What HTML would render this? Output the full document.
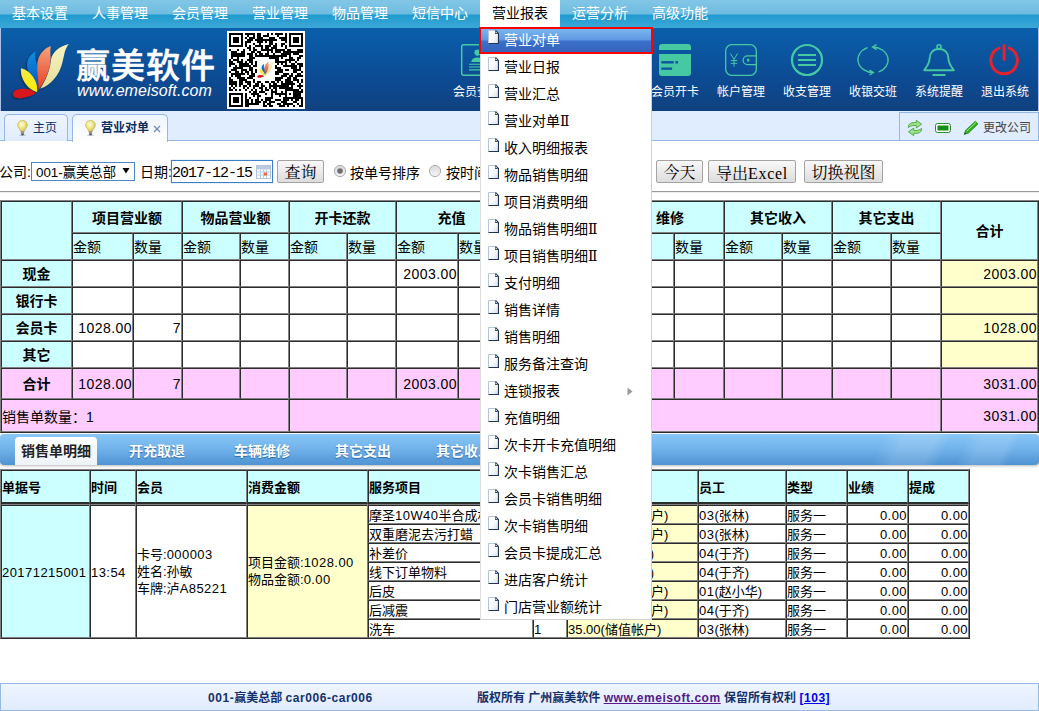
<!DOCTYPE html>
<html lang="zh-CN">
<head>
<meta charset="utf-8">
<title>赢美软件 - 营业对单</title>
<style>
*{box-sizing:border-box;}
html,body{margin:0;padding:0;}
body{width:1039px;height:711px;overflow:hidden;position:relative;background:#fff;
  font-family:"Liberation Sans","Noto Sans CJK SC",sans-serif;font-size:14px;color:#000;}
.abs{position:absolute;}
/* ---------- top nav ---------- */
#nav{position:absolute;left:0;top:0;width:1039px;height:28px;
  background:linear-gradient(#82c6e6 0,#6ebce1 14px,#209ad0 15px,#3ca8d6 28px);}
#nav span{position:absolute;top:0;height:28px;width:80px;line-height:26px;text-align:center;color:#fff;font-size:14px;}
#nav span.on{background:#fff;color:#000;height:27px;}
/* ---------- banner ---------- */
#banner{position:absolute;left:0;top:28px;width:1039px;height:83px;border-left:1px solid #a9c1e9;border-right:1px solid #a9c1e9;
  background:linear-gradient(#0a5fab 0,#0c4b94 60%,#10417f 100%);}
#brand{position:absolute;left:75px;top:18px;color:#fff;font-weight:500;-webkit-text-stroke:.5px #fff;font-size:34px;line-height:40px;letter-spacing:1px;white-space:nowrap;}
#url{position:absolute;left:76px;top:53px;color:#fff;font-style:italic;font-size:16px;line-height:20px;white-space:nowrap;letter-spacing:.1px;}
.tool{position:absolute;top:57px;width:66px;text-align:center;color:#fff;font-size:12px;line-height:14px;white-space:nowrap;}
/* ---------- tabs ---------- */
#tabs{position:absolute;left:0;top:111px;width:1039px;height:30px;background:#e0ecff;border-bottom:1px solid #95b8e7;}
.tab{position:absolute;top:3px;height:27px;border:1px solid #95b8e7;border-bottom:0;border-radius:5px 5px 0 0;
  background:linear-gradient(#eff5ff,#e0ecff);font-size:12px;line-height:27px;color:#0e2d5f;white-space:nowrap;}
.tab.sel{background:linear-gradient(#eff5ff,#fff);height:28px;font-weight:bold;}
#tabtool{position:absolute;left:899px;top:1px;width:140px;height:28px;border:1px solid #95b8e7;border-bottom:0;background:#e0ecff;}
/* ---------- toolbar ---------- */
#bar{position:absolute;left:0;top:158px;width:1039px;height:28px;font-size:14px;}
.btn{position:absolute;top:2px;height:23px;border:1px solid #a3a3a3;border-radius:2px;background:linear-gradient(#f8f8f8,#dddddd);
  font-family:"Liberation Mono","Noto Serif CJK SC",serif;font-size:16px;line-height:26px;text-align:center;color:#000;white-space:nowrap;overflow:hidden;}
#hr{position:absolute;left:0;top:191px;width:1039px;height:2px;border-top:1px solid #9a9a9a;border-bottom:1px solid #eee;}
/* ---------- tables ---------- */
table{border-collapse:separate;border-spacing:0;table-layout:fixed;border:1px solid;border-color:#808080 #2c2c2c #2c2c2c #808080;}
td,th{border:1px solid;border-color:#2c2c2c #808080 #808080 #2c2c2c;padding:0;overflow:hidden;white-space:nowrap;}
#t1{position:absolute;left:0;top:200px;width:1039px;font-size:14px;}
#t1 th{background:#ccffff;font-weight:bold;text-align:center;padding-bottom:1px;}
#t1 td.h{background:#ccffff;text-align:left;font-weight:normal;padding-bottom:2px;letter-spacing:0;}
#t1 td{text-align:right;background:#fff;padding-right:0;letter-spacing:.45px;}
#t1 td.y{background:#ffffcc;}
#t1 tr.p td,#t1 tr.p th{background:#ffccff;}
/* ---------- second tab bar ---------- */
#bar2{position:absolute;left:0;top:434px;width:1039px;height:31px;border-radius:4px;box-shadow:0 1px 3px rgba(0,0,0,.28);
  background:linear-gradient(115deg,rgba(255,255,255,0) 84%,rgba(255,255,255,.14) 86%,rgba(255,255,255,.14) 89%,rgba(255,255,255,0) 90.5%,rgba(255,255,255,0) 92%,rgba(255,255,255,.12) 93.5%,rgba(255,255,255,.12) 96%,rgba(255,255,255,0) 97%),linear-gradient(#88c7f7,#70b1ea 50%,#4f93d3);}
#bar2 span{position:absolute;top:3px;height:28px;line-height:29px;font-weight:bold;font-size:14px;color:#fff;text-shadow:0 1px 1px #2d66a6;white-space:nowrap;}
#bar2 span.sel{left:15px;width:82px;text-align:center;background:linear-gradient(#fff,#eef3f8);color:#222;border-radius:4px 4px 0 0;text-shadow:none;}
/* ---------- detail table ---------- */
#t2{position:absolute;left:0;top:469px;width:970px;font-size:13px;}
#t2 th{background:#ccffff;text-align:left;font-weight:bold;height:34px;border-bottom:2px solid #2c2c2c;}
#t2 td{background:#fff;height:19px;line-height:15px;padding-top:2px;}
#t2 td.m{line-height:17px;padding-top:0;}
.n{letter-spacing:.45px;}
#t2 td.z .n{letter-spacing:0;}
#t2 tr.f td{height:20px;border-top-color:#808080;box-shadow:inset 0 1px 0 #2c2c2c;}
#t2 td.y{background:#ffffcc;}
#t2 td.c{background:#ccffff;}
#t2 td.r{text-align:right;}
/* ---------- footer ---------- */
#foot{position:absolute;left:0;top:683px;width:1039px;height:28px;border:1px solid #95b8e7;background:linear-gradient(#eff5ff,#e0ecff);
  font-size:12px;font-weight:bold;color:#15316b;line-height:28px;}
#foot .n{letter-spacing:.55px;}
/* ---------- menu ---------- */
#menu{position:absolute;left:480px;top:27px;width:172px;height:593px;background:#fff;}
#menu::after{content:'';position:absolute;left:0;top:27px;width:172px;height:566px;box-sizing:border-box;border:1px solid #cfcfcf;border-top:0;border-left-color:#dedede;pointer-events:none;}
#menu div{position:relative;height:27px;line-height:26px;padding-left:24px;font-size:14px;color:#000;white-space:nowrap;}
.rn{font-family:'DejaVu Serif','Noto Serif CJK SC',serif;font-size:14px;}
#menu div.on{color:#fff;background:linear-gradient(#7cbcf2 0,#6198e2 13px,#3b71cc 14px,#355fb6 27px);}
#menu div.on::after{content:'';position:absolute;left:-1px;top:0;width:174px;height:27px;box-sizing:border-box;border:2px solid #ff0000;}
</style>
</head>
<body>
<svg width="0" height="0" style="position:absolute"><defs>
<radialGradient id="bulbg" cx="40%" cy="35%" r="70%"><stop offset="0" stop-color="#fffcd8"/><stop offset="0.55" stop-color="#ebe480"/><stop offset="1" stop-color="#c9b752"/></radialGradient>
<linearGradient id="pgg" x1="0" y1="0" x2="1" y2="1"><stop offset="0.45" stop-color="#fff"/><stop offset="1" stop-color="#d3def0"/></linearGradient>
<g id="bulb"><ellipse cx="5.5" cy="15.2" rx="3.6" ry="0.8" fill="#000" opacity=".18"/><path d="M5.5,0.5C2.5,0.5 .7,2.6 .7,5C.7,7.5 3.1,9 3.7,11.5H7.3C7.9,9 10.3,7.5 10.3,5C10.3,2.6 8.5,.5 5.5,.5Z" fill="url(#bulbg)" stroke="#cbb55e" stroke-width=".8"/><rect x="3.9" y="11.4" width="3.2" height="2.8" fill="#8e8e8e"/><rect x="4.4" y="14" width="2.2" height="1.2" fill="#3c3c3c"/></g>
<g id="pg"><path d="M.5,.5H7.5L10.5,3.5V13.5H.5Z" fill="url(#pgg)"/><path d="M.5,13.5V.5H7.5" fill="none" stroke="#b5c4e0"/><path d="M7.5,.5L10.5,3.5V13.5H.5" fill="none" stroke="#22364f" stroke-width="1.2"/><path d="M7,.5V4H10.5Z" fill="#3b526f"/><rect x="7.6" y="1.8" width="1.2" height="1.2" fill="#dfe7f3"/></g>
</defs></svg>
<div id="nav">
<span style="left:0">基本设置</span><span style="left:80px">人事管理</span><span style="left:160px">会员管理</span><span style="left:240px">营业管理</span><span style="left:320px">物品管理</span><span style="left:400px">短信中心</span><span class="on" style="left:480px">营业报表</span><span style="left:560px">运营分析</span><span style="left:640px">高级功能</span>
</div>
<div id="banner">
<!--BSVG--><svg class="abs" style="left:-1px;top:0" width="1039" height="83" viewBox="0 28 1039 83">
<defs>
<linearGradient id="gor" x1="0" y1="0" x2="0" y2="1"><stop offset="0" stop-color="#f4a57c"/><stop offset="1" stop-color="#e83a22"/></linearGradient>
<linearGradient id="gbl" x1="0" y1="0" x2="0" y2="1"><stop offset="0" stop-color="#0a8ee0"/><stop offset="1" stop-color="#0a55b8"/></linearGradient>
<linearGradient id="gye" x1="0" y1="0" x2="0" y2="1"><stop offset="0" stop-color="#f5e84a"/><stop offset="1" stop-color="#ffee00"/></linearGradient>
<linearGradient id="gcr" x1="0" y1="0" x2="0" y2="1"><stop offset="0" stop-color="#f6f3c4"/><stop offset="1" stop-color="#e6df96"/></linearGradient>
<filter id="sh" x="-20%" y="-20%" width="140%" height="140%"><feDropShadow dx="-1" dy="1" stdDeviation="1.2" flood-color="#000" flood-opacity=".45"/></filter>
<g id="petals">
<path d="M28.5,44.5 C34,36 38,26 39,16 C40,8 48,2 57,0 C53,4 52.5,10 50.5,18 C47.5,31 39,41 28.5,44.5Z" fill="url(#gcr)"/>
<path d="M26,44 C22,36 12,26 16,16 C18,11 21,9 23.5,7.5 C22,14 25,20 26,26 C27,32 27,38 26,44Z" fill="url(#gbl)"/>
<path d="M26.5,46 C27,36 24,24 26,16 C28,9 33,4 38.8,2 C37.5,8 39.5,14 38,21 C36,31 31,40 26.5,46Z" fill="url(#gor)"/>
<path d="M25,48 C17,46 8,36 9,24.3 C17,26 26.5,36 25,48Z" fill="url(#gye)"/>
<path d="M24,49 C18,44 6,43 1.5,48 C-1,52 4,55 10,54 C16,53 21,51 24,49Z" fill="#d8141c"/>
</g>
</defs>
<g transform="translate(12,44)" filter="url(#sh)"><use href="#petals"/></g>
<g transform="translate(227,31)"><rect width="78" height="78" fill="#fff"/><g transform="translate(2,2)"><path d="M0 0h14v2h-14zM16 0h10v2h-10zM28 0h4v2h-4zM38 0h2v2h-2zM42 0h2v2h-2zM46 0h8v2h-8zM56 0h2v2h-2zM60 0h14v2h-14zM0 2h2v2h-2zM12 2h2v2h-2zM18 2h2v2h-2zM24 2h2v2h-2zM28 2h4v2h-4zM34 2h6v2h-6zM48 2h2v2h-2zM56 2h2v2h-2zM60 2h2v2h-2zM72 2h2v2h-2zM0 4h2v2h-2zM4 4h6v2h-6zM12 4h2v2h-2zM16 4h2v2h-2zM20 4h6v2h-6zM28 4h6v2h-6zM40 4h6v2h-6zM50 4h8v2h-8zM60 4h2v2h-2zM64 4h6v2h-6zM72 4h2v2h-2zM0 6h2v2h-2zM4 6h6v2h-6zM12 6h2v2h-2zM18 6h6v2h-6zM26 6h22v2h-22zM52 6h6v2h-6zM60 6h2v2h-2zM64 6h6v2h-6zM72 6h2v2h-2zM0 8h2v2h-2zM4 8h6v2h-6zM12 8h2v2h-2zM16 8h6v2h-6zM28 8h6v2h-6zM36 8h2v2h-2zM40 8h4v2h-4zM56 8h2v2h-2zM60 8h2v2h-2zM64 8h6v2h-6zM72 8h2v2h-2zM0 10h2v2h-2zM12 10h2v2h-2zM16 10h2v2h-2zM24 10h2v2h-2zM30 10h2v2h-2zM40 10h4v2h-4zM46 10h2v2h-2zM52 10h4v2h-4zM60 10h2v2h-2zM72 10h2v2h-2zM0 12h14v2h-14zM16 12h2v2h-2zM20 12h2v2h-2zM26 12h8v2h-8zM36 12h6v2h-6zM44 12h4v2h-4zM52 12h2v2h-2zM56 12h2v2h-2zM60 12h14v2h-14zM18 14h4v2h-4zM24 14h2v2h-2zM32 14h2v2h-2zM36 14h4v2h-4zM42 14h6v2h-6zM56 14h2v2h-2zM0 16h2v2h-2zM8 16h2v2h-2zM14 16h2v2h-2zM20 16h2v2h-2zM24 16h4v2h-4zM32 16h12v2h-12zM46 16h10v2h-10zM58 16h4v2h-4zM68 16h6v2h-6zM2 18h6v2h-6zM12 18h4v2h-4zM22 18h4v2h-4zM28 18h4v2h-4zM38 18h2v2h-2zM42 18h2v2h-2zM46 18h6v2h-6zM54 18h20v2h-20zM2 20h14v2h-14zM18 20h6v2h-6zM26 20h2v2h-2zM30 20h4v2h-4zM36 20h4v2h-4zM44 20h2v2h-2zM52 20h10v2h-10zM64 20h6v2h-6zM2 22h14v2h-14zM20 22h4v2h-4zM26 22h32v2h-32zM60 22h2v2h-2zM70 22h4v2h-4zM2 24h2v2h-2zM8 24h2v2h-2zM20 24h6v2h-6zM40 24h10v2h-10zM52 24h2v2h-2zM60 24h4v2h-4zM68 24h4v2h-4zM0 26h2v2h-2zM4 26h6v2h-6zM12 26h2v2h-2zM18 26h6v2h-6zM46 26h4v2h-4zM56 26h10v2h-10zM68 26h2v2h-2zM0 28h4v2h-4zM8 28h6v2h-6zM16 28h2v2h-2zM20 28h4v2h-4zM26 28h2v2h-2zM46 28h12v2h-12zM60 28h2v2h-2zM66 28h2v2h-2zM0 30h6v2h-6zM10 30h10v2h-10zM22 30h2v2h-2zM26 30h2v2h-2zM48 30h2v2h-2zM52 30h2v2h-2zM56 30h2v2h-2zM62 30h4v2h-4zM68 30h6v2h-6zM0 32h2v2h-2zM6 32h2v2h-2zM10 32h12v2h-12zM24 32h4v2h-4zM46 32h2v2h-2zM54 32h14v2h-14zM70 32h4v2h-4zM4 34h10v2h-10zM20 34h4v2h-4zM46 34h6v2h-6zM62 34h6v2h-6zM70 34h2v2h-2zM2 36h6v2h-6zM12 36h6v2h-6zM20 36h4v2h-4zM26 36h2v2h-2zM48 36h6v2h-6zM56 36h4v2h-4zM64 36h8v2h-8zM0 38h2v2h-2zM6 38h4v2h-4zM12 38h2v2h-2zM16 38h4v2h-4zM22 38h2v2h-2zM26 38h2v2h-2zM46 38h8v2h-8zM64 38h4v2h-4zM72 38h2v2h-2zM2 40h14v2h-14zM18 40h2v2h-2zM22 40h4v2h-4zM46 40h4v2h-4zM54 40h6v2h-6zM62 40h2v2h-2zM68 40h4v2h-4zM2 42h2v2h-2zM6 42h6v2h-6zM20 42h6v2h-6zM52 42h6v2h-6zM60 42h4v2h-4zM66 42h8v2h-8zM0 44h2v2h-2zM8 44h8v2h-8zM18 44h6v2h-6zM46 44h8v2h-8zM58 44h4v2h-4zM64 44h4v2h-4zM0 46h4v2h-4zM10 46h8v2h-8zM24 46h2v2h-2zM46 46h6v2h-6zM56 46h6v2h-6zM64 46h6v2h-6zM72 46h2v2h-2zM0 48h8v2h-8zM10 48h4v2h-4zM16 48h6v2h-6zM24 48h2v2h-2zM28 48h4v2h-4zM36 48h4v2h-4zM42 48h4v2h-4zM48 48h2v2h-2zM52 48h2v2h-2zM56 48h8v2h-8zM68 48h2v2h-2zM72 48h2v2h-2zM0 50h8v2h-8zM10 50h4v2h-4zM18 50h4v2h-4zM26 50h4v2h-4zM32 50h2v2h-2zM40 50h2v2h-2zM44 50h4v2h-4zM52 50h14v2h-14zM70 50h2v2h-2zM2 52h2v2h-2zM6 52h2v2h-2zM10 52h2v2h-2zM14 52h4v2h-4zM20 52h2v2h-2zM24 52h6v2h-6zM32 52h4v2h-4zM40 52h20v2h-20zM62 52h2v2h-2zM68 52h6v2h-6zM0 54h2v2h-2zM4 54h2v2h-2zM14 54h2v2h-2zM18 54h2v2h-2zM24 54h2v2h-2zM30 54h4v2h-4zM36 54h2v2h-2zM40 54h2v2h-2zM44 54h4v2h-4zM50 54h14v2h-14zM70 54h2v2h-2zM0 56h4v2h-4zM6 56h2v2h-2zM10 56h2v2h-2zM16 56h2v2h-2zM22 56h2v2h-2zM26 56h2v2h-2zM32 56h2v2h-2zM36 56h4v2h-4zM42 56h2v2h-2zM46 56h2v2h-2zM56 56h14v2h-14zM72 56h2v2h-2zM20 58h2v2h-2zM24 58h4v2h-4zM30 58h6v2h-6zM42 58h6v2h-6zM52 58h2v2h-2zM56 58h2v2h-2zM64 58h10v2h-10zM0 60h14v2h-14zM16 60h2v2h-2zM22 60h8v2h-8zM36 60h2v2h-2zM42 60h2v2h-2zM46 60h12v2h-12zM60 60h2v2h-2zM64 60h8v2h-8zM0 62h2v2h-2zM12 62h2v2h-2zM16 62h2v2h-2zM24 62h2v2h-2zM28 62h4v2h-4zM42 62h2v2h-2zM50 62h2v2h-2zM56 62h2v2h-2zM64 62h8v2h-8zM0 64h2v2h-2zM4 64h6v2h-6zM12 64h2v2h-2zM16 64h2v2h-2zM20 64h2v2h-2zM28 64h2v2h-2zM36 64h8v2h-8zM54 64h20v2h-20zM0 66h2v2h-2zM4 66h6v2h-6zM12 66h2v2h-2zM16 66h4v2h-4zM22 66h2v2h-2zM26 66h4v2h-4zM32 66h2v2h-2zM36 66h6v2h-6zM46 66h6v2h-6zM54 66h6v2h-6zM62 66h2v2h-2zM66 66h4v2h-4zM72 66h2v2h-2zM0 68h2v2h-2zM4 68h6v2h-6zM12 68h2v2h-2zM16 68h4v2h-4zM22 68h2v2h-2zM26 68h6v2h-6zM34 68h4v2h-4zM40 68h6v2h-6zM52 68h6v2h-6zM64 68h4v2h-4zM72 68h2v2h-2zM0 70h2v2h-2zM12 70h2v2h-2zM16 70h14v2h-14zM34 70h2v2h-2zM38 70h4v2h-4zM48 70h4v2h-4zM54 70h10v2h-10zM68 70h2v2h-2zM72 70h2v2h-2zM0 72h14v2h-14zM16 72h4v2h-4zM34 72h4v2h-4zM40 72h4v2h-4zM50 72h6v2h-6zM58 72h2v2h-2zM64 72h2v2h-2zM70 72h4v2h-4z" fill="#000"/></g><g transform="translate(30,30.5) scale(0.3)"><use href="#petals"/></g></g>
<g fill="none" stroke="#46c9a2" stroke-width="1.5">
<rect x="461.7" y="44.7" width="30.6" height="30.6" rx="2"/>
<rect x="725.7" y="44.7" width="30.6" height="30.6" rx="6" stroke-width="1.3"/>
<path d="M757,55.8h-9.5a4.4,4.4 0 0 0 0,8.8h9.5" stroke-width="1.3"/>
<path d="M730.5,53.5l3.5,6l3.5,-6M734,59.5v7M730.8,60.6h6.4M730.8,63.3h6.4" stroke-width="1"/>
<circle cx="807" cy="60" r="15" stroke-width="2.2"/>
<path d="M798,55h18M798,60h18M798,65h18" stroke-width="2.2"/>
<path d="M867.5,47.6A15.6,13 0 0 0 873.5,72.6M869.5,75l4,-2.4l-4,-2.6" stroke-width="1.3"/>
<path d="M878.5,72A15.6,13 0 0 0 872.5,47M876.5,44.6l-4,2.4l4,2.6" stroke-width="1.3"/>
<circle cx="939" cy="46.7" r="2" stroke-width="1.6"/>
<path d="M939,49C933,49 929.8,53 929.6,58.5C929.4,64 926,67.5 924.2,70.2H953.8C952,67.5 948.6,64 948.4,58.5C948.2,53 945,49 939,49Z" stroke-width="1.9" stroke-linejoin="round"/>
<path d="M932.5,75h13" stroke-width="2"/>
</g>
<g fill="#46c9a2"><circle cx="477.5" cy="52.6" r="3.1"/><path d="M471.2,62C471.6,59 474,57.6 477.5,57.6S483.4,59 483.8,62Z"/><path d="M469,63.7h17v1.1h-17zM469,66.5h17v1.1h-17zM469,69.3h17v1.1h-17z"/>
<path d="M659,47a3,3 0 0 1 3,-3h26a3,3 0 0 1 3,3v3.1h-32zM659,54h32v19a3,3 0 0 1 -3,3h-26a3,3 0 0 1 -3,-3z"/>
<ellipse cx="748.2" cy="60.1" rx="1.3" ry="1.6"/></g>
<g fill="#0c55a0"><rect x="661.3" y="61.1" width="12.4" height="2.4"/><rect x="675.4" y="61.1" width="2.6" height="2.4"/><rect x="661.3" y="67.5" width="10.8" height="2.3"/></g>
<g fill="none" stroke="#e8212c" stroke-width="3" stroke-linecap="round"><path d="M999,48.2A13.3,13.3 0 1 0 1009.2,48.2"/><path d="M1004.1,45.5v14"/></g>
</svg><!--/BSVG-->
<div id="brand">赢美软件</div>
<div id="url">www.emeisoft.com</div>
<div class="tool" style="left:443px">会员查询</div>
<div class="tool" style="left:641px">会员开卡</div>
<div class="tool" style="left:707px">帐户管理</div>
<div class="tool" style="left:773px">收支管理</div>
<div class="tool" style="left:839px">收银交班</div>
<div class="tool" style="left:905px">系统提醒</div>
<div class="tool" style="left:971px">退出系统</div>
</div>
<div id="tabs">
<div class="tab" style="left:4px;width:64px;padding-left:28px"><svg class="abs" style="left:12px;top:5px" width="11" height="16"><use href="#bulb"/></svg>主页</div>
<div class="tab sel" style="left:72px;width:96px;padding-left:28px"><svg class="abs" style="left:12px;top:5px" width="11" height="16"><use href="#bulb"/></svg>营业对单<svg class="abs" style="left:80px;top:10px" width="8" height="8" viewBox="0 0 8 8"><path d="M1,1l6,6M7,1l-6,6" stroke="#6f8cbd" stroke-width="1.3" fill="none"/></svg></div>
<div id="tabtool"><svg class="abs" style="left:0;top:0" width="90" height="28" viewBox="900 112 90 28">
<g fill="#9be28a" stroke="#4aa53e" stroke-width=".9" stroke-linejoin="round"><path d="M908.3,126.5C908.3,122.5 911.5,121.3 916.3,121.6V119.3L921.6,123.2L916.3,127V124.6C913,124.3 911,124.6 908.3,126.5Z"/><path d="M921.7,127.5C921.7,131.5 918.5,132.7 913.7,132.4V134.7L908.4,130.8L913.7,127V129.4C917,129.7 919,129.4 921.7,127.5Z"/></g>
<rect x="935.5" y="122.5" width="15" height="9" rx="2" fill="#fff" stroke="#2c8c2c"/><rect x="937.5" y="124.5" width="11" height="5" fill="#129012"/>
<path d="M964.2,133.4L965.6,129.2L975.4,120.2L978,122.9L968.3,132.2Z" fill="#2fb01f" stroke="#1f8a14" stroke-width=".7"/><path d="M966.6,130.2L975.9,121.6" stroke="#9fe88d" stroke-width="1"/><path d="M964.2,133.4L964.9,131.3L966.2,132.7Z" fill="#333"/>
</svg><span class="abs" style="left:83px;top:8px;font-size:12px;line-height:14px;color:#444">更改公司</span></div>
</div>
<div id="bar">
<span class="abs" style="left:-1px;top:5px;line-height:18px">公司:</span>
<div class="abs" style="left:31px;top:4px;width:104px;height:19px;border:1px solid #4c86c6;background:#fff;font-size:13.33px;line-height:20px;padding-left:4px;overflow:hidden;color:#000;white-space:nowrap">001-赢美总部<svg class="abs" style="left:90px;top:5px" width="8" height="6" viewBox="0 0 8 6"><path d="M0.5 0h7L4 5.5z" fill="#000"/></svg></div>
<span class="abs" style="left:140px;top:5px;line-height:18px">日期:</span>
<div class="abs" style="left:171px;top:2px;width:102px;height:23px;border:1px solid #3f7fc6;box-shadow:0 0 1px #7aa7da;background:#fff;font-family:'Liberation Mono',monospace;font-size:15px;letter-spacing:-1px;line-height:26px;padding-left:0;white-space:nowrap">2017-12-15<svg class="abs" style="left:84px;top:4px" width="15" height="14" viewBox="0 0 15 14"><rect x="0.5" y="0.5" width="14" height="13" fill="#fff" stroke="#b3c3dc"/><rect x="1" y="1" width="13" height="3.5" fill="#bccbe2"/><path d="M1 7h13M1 10h13M4.5 4.5v9M7.5 4.5v9M10.5 4.5v9" stroke="#b9cdea" stroke-width="1"/><rect x="8" y="7.5" width="3" height="3" fill="#e8694a"/></svg></div>
<svg class="abs" style="left:333px;top:6px" width="14" height="14" viewBox="0 0 14 14"><defs><linearGradient id="rg" x1="0" y1="0" x2="0" y2="1"><stop offset="0" stop-color="#d8d8d8"/><stop offset="1" stop-color="#f6f6f6"/></linearGradient></defs><circle cx="7" cy="7" r="5.6" fill="url(#rg)" stroke="#adadad"/><circle cx="7" cy="7" r="2.8" fill="#6e6e6e"/></svg>
<svg class="abs" style="left:428px;top:6px" width="14" height="14" viewBox="0 0 14 14"><circle cx="7" cy="7" r="5.6" fill="url(#rg)" stroke="#adadad"/></svg>
<div class="btn" style="left:277px;width:47px">查询</div>
<span class="abs" style="left:350px;top:6px;line-height:18px">按单号排序</span>
<span class="abs" style="left:446px;top:6px;line-height:18px">按时间排序</span>
<div class="btn" style="left:656px;width:47px">今天</div>
<div class="btn" style="left:708px;width:88px">导出<span style="font-family:'Liberation Serif',serif;letter-spacing:.7px">Excel</span></div>
<div class="btn" style="left:804px;width:79px">切换视图</div>
</div>
<div id="hr"></div>
<!--T1-->
<table id="t1"><colgroup><col style="width:71px"><col style="width:61px"><col style="width:49px"><col style="width:58px"><col style="width:49px"><col style="width:58px"><col style="width:49px"><col style="width:62px"><col style="width:49px"><col style="width:58px"><col style="width:51px"><col style="width:58px"><col style="width:50px"><col style="width:58px"><col style="width:50px"><col style="width:59px"><col style="width:50px"><col style="width:97px"></colgroup>
<tr style="height:32px"><th rowspan="2"></th><th colspan="2">项目营业额</th><th colspan="2">物品营业额</th><th colspan="2">开卡还款</th><th colspan="2">充值</th><th colspan="2">取款退卡</th><th colspan="2">维修</th><th colspan="2">其它收入</th><th colspan="2">其它支出</th><th rowspan="2">合计</th></tr>
<tr style="height:27px"><td class="h">金额</td><td class="h">数量</td><td class="h">金额</td><td class="h">数量</td><td class="h">金额</td><td class="h">数量</td><td class="h">金额</td><td class="h">数量</td><td class="h">金额</td><td class="h">数量</td><td class="h">金额</td><td class="h">数量</td><td class="h">金额</td><td class="h">数量</td><td class="h">金额</td><td class="h">数量</td></tr>
<tr class="" style="height:27px"><th>现金</th><td></td><td></td><td></td><td></td><td></td><td></td><td>2003.00</td><td></td><td></td><td></td><td></td><td></td><td></td><td></td><td></td><td></td><td class="y">2003.00</td></tr>
<tr class="" style="height:27px"><th>银行卡</th><td></td><td></td><td></td><td></td><td></td><td></td><td></td><td></td><td></td><td></td><td></td><td></td><td></td><td></td><td></td><td></td><td class="y"></td></tr>
<tr class="" style="height:27px"><th>会员卡</th><td>1028.00</td><td>7</td><td></td><td></td><td></td><td></td><td></td><td></td><td></td><td></td><td></td><td></td><td></td><td></td><td></td><td></td><td class="y">1028.00</td></tr>
<tr class="" style="height:27px"><th>其它</th><td></td><td></td><td></td><td></td><td></td><td></td><td></td><td></td><td></td><td></td><td></td><td></td><td></td><td></td><td></td><td></td><td class="y"></td></tr>
<tr class="p" style="height:31px"><th>合计</th><td>1028.00</td><td>7</td><td></td><td></td><td></td><td></td><td>2003.00</td><td></td><td></td><td></td><td></td><td></td><td></td><td></td><td></td><td></td><td class="y">3031.00</td></tr>
<tr class="p" style="height:33px"><td colspan="5" style="text-align:left;letter-spacing:0">销售单数量：1</td><td colspan="12"></td><td>3031.00</td></tr>
</table>
<!--/T1-->
<!--BAR2-->
<div id="bar2"><span class="sel">销售单明细</span><span style="left:129px">开充取退</span><span style="left:234px">车辆维修</span><span style="left:335px">其它支出</span><span style="left:436px">其它收入</span></div>
<!--/BAR2-->
<!--T2-->
<table id="t2"><colgroup><col style="width:89px"><col style="width:46px"><col style="width:111px"><col style="width:121px"><col style="width:165px"><col style="width:34px"><col style="width:131px"><col style="width:88px"><col style="width:61px"><col style="width:61px"><col style="width:61px"></colgroup>
<tr><th>单据号</th><th>时间</th><th>会员</th><th>消费金额</th><th>服务项目</th><th>数量</th><th>金额(支付)</th><th>员工</th><th>类型</th><th>业绩</th><th>提成</th></tr>
<tr class="f"><td rowspan="7" class="c"><span class="n">20171215001</span></td><td rowspan="7"><span class="n">13:54</span></td><td rowspan="7" class="m">卡号:<span class="n">000003</span><br>姓名:孙敏<br>车牌:泸<span class="n">A85221</span></td><td rowspan="7" class="y m">项目金额:<span class="n">1028.00</span><br>物品金额:<span class="n">0.00</span></td><td>摩圣<span class="n">10W40</span>半合成机油</td><td>1</td><td class="y z"><span class="n">398.00</span>(储值帐户)</td><td><span class="n">03</span>(张林)</td><td>服务一</td><td class="r"><span class="n">0.00</span></td><td class="r"><span class="n">0.00</span></td></tr>
<tr><td>双重磨泥去污打蜡</td><td>1</td><td class="y z"><span class="n">190.00</span>(储值帐户)</td><td><span class="n">03</span>(张林)</td><td>服务一</td><td class="r"><span class="n">0.00</span></td><td class="r"><span class="n">0.00</span></td></tr>
<tr><td>补差价</td><td>1</td><td class="y z"><span class="n">5.00</span>(储值帐户)</td><td><span class="n">04</span>(于齐)</td><td>服务一</td><td class="r"><span class="n">0.00</span></td><td class="r"><span class="n">0.00</span></td></tr>
<tr><td>线下订单物料</td><td>1</td><td class="y z"><span class="n">0.00</span>(储值帐户)</td><td><span class="n">04</span>(于齐)</td><td>服务一</td><td class="r"><span class="n">0.00</span></td><td class="r"><span class="n">0.00</span></td></tr>
<tr><td>后皮</td><td>1</td><td class="y z"><span class="n">200.00</span>(储值帐户)</td><td><span class="n">01</span>(赵小华)</td><td>服务一</td><td class="r"><span class="n">0.00</span></td><td class="r"><span class="n">0.00</span></td></tr>
<tr><td>后减震</td><td>1</td><td class="y z"><span class="n">200.00</span>(储值帐户)</td><td><span class="n">04</span>(于齐)</td><td>服务一</td><td class="r"><span class="n">0.00</span></td><td class="r"><span class="n">0.00</span></td></tr>
<tr><td>洗车</td><td>1</td><td class="y z"><span class="n">35.00</span>(储值帐户)</td><td><span class="n">03</span>(张林)</td><td>服务一</td><td class="r"><span class="n">0.00</span></td><td class="r"><span class="n">0.00</span></td></tr>
</table>
<!--/T2-->
<div id="foot">
<span class="abs" style="left:207px;top:0"><span class="n">001-</span>赢美总部 <span class="n">car006-car006</span></span>
<span class="abs" style="left:476px;top:0">版权所有 广州赢美软件 <u class="n" style="color:#551a8b">www.emeisoft.com</u> 保留所有权利 <u class="n" style="color:#0000ee">[103]</u></span>
</div>
<div id="menu">
<div class="on"><svg class="abs" style="left:8px;top:3px" width="11" height="14"><use href="#pg"/></svg>营业对单</div><div><svg class="abs" style="left:8px;top:3px" width="11" height="14"><use href="#pg"/></svg>营业日报</div><div><svg class="abs" style="left:8px;top:3px" width="11" height="14"><use href="#pg"/></svg>营业汇总</div><div><svg class="abs" style="left:8px;top:3px" width="11" height="14"><use href="#pg"/></svg>营业对单<span class="rn">Ⅱ</span></div><div><svg class="abs" style="left:8px;top:3px" width="11" height="14"><use href="#pg"/></svg>收入明细报表</div><div><svg class="abs" style="left:8px;top:3px" width="11" height="14"><use href="#pg"/></svg>物品销售明细</div><div><svg class="abs" style="left:8px;top:3px" width="11" height="14"><use href="#pg"/></svg>项目消费明细</div><div><svg class="abs" style="left:8px;top:3px" width="11" height="14"><use href="#pg"/></svg>物品销售明细<span class="rn">Ⅱ</span></div><div><svg class="abs" style="left:8px;top:3px" width="11" height="14"><use href="#pg"/></svg>项目销售明细<span class="rn">Ⅱ</span></div><div><svg class="abs" style="left:8px;top:3px" width="11" height="14"><use href="#pg"/></svg>支付明细</div><div><svg class="abs" style="left:8px;top:3px" width="11" height="14"><use href="#pg"/></svg>销售详情</div><div><svg class="abs" style="left:8px;top:3px" width="11" height="14"><use href="#pg"/></svg>销售明细</div><div><svg class="abs" style="left:8px;top:3px" width="11" height="14"><use href="#pg"/></svg>服务备注查询</div><div><svg class="abs" style="left:8px;top:3px" width="11" height="14"><use href="#pg"/></svg>连锁报表<svg class="abs" style="left:147px;top:9px" width="6" height="9" viewBox="0 0 6 9"><path d="M.5,.5L5.5,4.5L.5,8.5Z" fill="#9a9a9a"/></svg></div><div><svg class="abs" style="left:8px;top:3px" width="11" height="14"><use href="#pg"/></svg>充值明细</div><div><svg class="abs" style="left:8px;top:3px" width="11" height="14"><use href="#pg"/></svg>次卡开卡充值明细</div><div><svg class="abs" style="left:8px;top:3px" width="11" height="14"><use href="#pg"/></svg>次卡销售汇总</div><div><svg class="abs" style="left:8px;top:3px" width="11" height="14"><use href="#pg"/></svg>会员卡销售明细</div><div><svg class="abs" style="left:8px;top:3px" width="11" height="14"><use href="#pg"/></svg>次卡销售明细</div><div><svg class="abs" style="left:8px;top:3px" width="11" height="14"><use href="#pg"/></svg>会员卡提成汇总</div><div><svg class="abs" style="left:8px;top:3px" width="11" height="14"><use href="#pg"/></svg>进店客户统计</div><div><svg class="abs" style="left:8px;top:3px" width="11" height="14"><use href="#pg"/></svg>门店营业额统计</div>
</div>
</body>
</html>
